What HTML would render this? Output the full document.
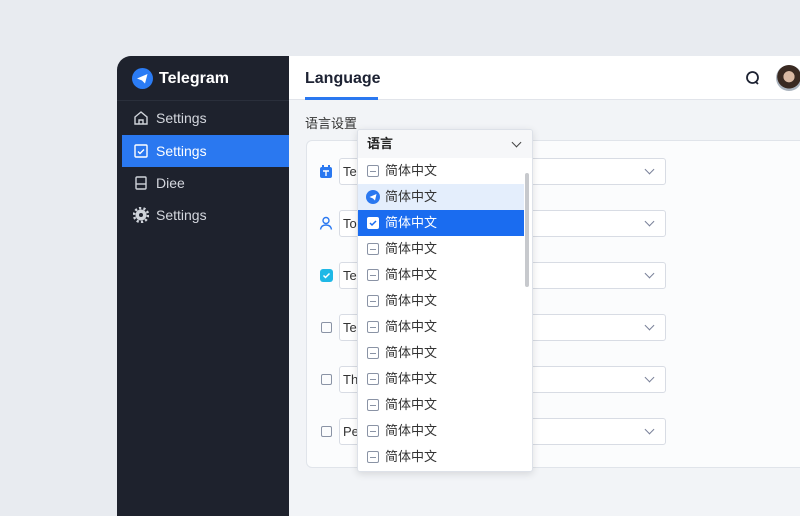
<!DOCTYPE html>
<html><head><meta charset="utf-8"><style>
*{margin:0;padding:0;box-sizing:border-box}
body{width:800px;height:499px;overflow:hidden;background:#e8ebf0;font-family:"Liberation Sans","Noto Sans CJK SC",sans-serif;position:relative}
.win{position:absolute;left:117px;top:56px;width:700px;height:460px;border-radius:14px 0 0 0;overflow:hidden;background:#f2f4f7}
.side{position:absolute;left:0;top:0;width:172px;height:100%;background:#1e222d}
.logo{position:absolute;left:15px;top:12px;width:21px;height:21px;border-radius:50%;background:#2b7cf5}
.brand{position:absolute;left:42px;top:14px;color:#fff;font-weight:bold;font-size:16px}
.div{position:absolute;left:0;top:44px;width:172px;height:1px;background:#2a2f3b}
.it{position:absolute;left:5px;width:167px;height:32px;color:#d4d7de;font-size:14px;line-height:32px;padding-left:34px}
.it svg{position:absolute;left:11px;top:8px}
.act{background:#2a78f0;color:#fff}
.hdr{position:absolute;left:172px;top:0;right:0;height:44px;background:#fff;border-bottom:1px solid #e1e4ea}
.tab{position:absolute;left:16px;top:14px;font-weight:bold;font-size:16px;color:#1d2233}
.ul{position:absolute;left:16px;top:41px;width:73px;height:3px;background:#2a78f0}
.card{position:absolute;left:189px;top:84px;width:520px;height:328px;background:#fbfcfd;border:1px solid #e0e4ea;border-radius:6px}
.sel{position:absolute;left:222px;width:327px;height:27px;background:#fff;border:1px solid #d8dce4;border-radius:3px;font-size:13px;color:#333;line-height:25px;padding-left:3px}
.sel:after{content:"";position:absolute;right:12px;top:7px;width:6px;height:6px;border-right:1.5px solid #7a8199;border-bottom:1.5px solid #7a8199;transform:rotate(45deg)}
.cb{position:absolute;left:204px;width:11px;height:11px;border:1.3px solid #8a93a5;border-radius:2px}
.dd{position:absolute;left:357px;top:129px;width:176px;height:343px;background:#fff;border:1px solid #dde1e8;border-radius:3px;box-shadow:0 2px 8px rgba(0,0,0,.12);overflow:hidden}
.ddh{height:28px;background:#f6f7f9;font-weight:bold;font-size:13px;line-height:28px;padding-left:9px;color:#222;position:relative}
.ddh:after{content:"";position:absolute;right:12px;top:9px;width:6px;height:6px;border-right:1.5px solid #444;border-bottom:1.5px solid #444;transform:rotate(45deg)}
.o{height:26px;line-height:26px;font-size:13px;color:#333;padding-left:27px;position:relative;width:166px}
.o i{position:absolute;left:9px;top:7px;width:12px;height:12px;border:1.2px solid #8a93a5;border-radius:2px}
.o i:after{content:"";position:absolute;left:2px;top:4.5px;width:6px;height:1.2px;background:#8a93a5}
.o.l{background:#e4eefc}
.o.s{background:#1a6cf0;color:#fff}
.sb{position:absolute;right:3px;top:43px;width:4px;height:114px;background:#c7c9cd;border-radius:2px}
</style></head><body>
<div class="win">
<div class="side">
<div class="logo"><svg width="21" height="21" viewBox="0 0 21 21"><path d="M5 10.5 15.5 6 13 15.5 10 12.5Z" fill="#fff"/></svg></div>
<div class="brand">Telegram</div>
<div class="div"></div>
<div class="it" style="top:46px"><svg width="16" height="16" viewBox="0 0 16 16" fill="none" stroke="#cfd3da" stroke-width="1.4"><path d="M2 7 8 2 14 7V14H2Z"/><path d="M6 14V10H10V14"/></svg>Settings</div>
<div class="it act" style="top:79px"><svg width="16" height="16" viewBox="0 0 16 16" fill="none" stroke="#fff" stroke-width="1.4"><rect x="2" y="2" width="12" height="12" rx="1"/><path d="M5 8.5 7 10.5 11 6.5"/></svg>Settings</div>
<div class="it" style="top:111px"><svg width="16" height="16" viewBox="0 0 16 16" fill="none" stroke="#cfd3da" stroke-width="1.4"><rect x="3" y="2" width="10" height="12" rx="1"/><path d="M3 9H13"/></svg>Diee</div>
<div class="it" style="top:143px"><svg width="16" height="16" viewBox="0 0 16 16"><circle cx="8" cy="8" r="5.5" fill="#cfd3da"/><circle cx="8" cy="8" r="7" fill="none" stroke="#cfd3da" stroke-width="2.5" stroke-dasharray="2.2 2.2"/><circle cx="8" cy="8" r="2" fill="#1e222d"/></svg>Settings</div>
</div>
<div class="hdr"><div class="tab">Language</div><div class="ul"></div>
<svg style="position:absolute;left:456px;top:14px" width="16" height="16" viewBox="0 0 16 16" fill="none" stroke="#1e2333" stroke-width="1.8"><circle cx="7.5" cy="7.5" r="5.5"/><path d="M11 12 13 14"/></svg>
<div style="position:absolute;left:487px;top:9px;width:26px;height:26px;border-radius:50%;background:radial-gradient(circle at 50% 45%,#d9b9a3 0 28%,#3a2a22 30% 60%,#aab3bd 62%)"></div>
</div>
</div>
<div style="left:305px;top:113px;position:absolute;font-size:13px;color:#333">语言设置</div>
<div class="card" style="left:306px;top:140px"></div>
<svg style="position:absolute;left:320px;top:165px" width="12" height="13" viewBox="0 0 12 13"><rect x="0" y="2" width="12" height="11" rx="2" fill="#2a78f0"/><rect x="2" y="0" width="2" height="3" fill="#2a78f0"/><rect x="8" y="0" width="2" height="3" fill="#2a78f0"/><path d="M3 6H9M6 6V11" stroke="#fff" stroke-width="1.4"/></svg>
<svg style="position:absolute;left:319px;top:216px" width="14" height="14" viewBox="0 0 14 14" fill="none" stroke="#2a78f0" stroke-width="1.4"><circle cx="7" cy="4.5" r="3"/><path d="M1.5 13.5C2 10 4 9 7 9S12 10 12.5 13.5"/></svg>
<svg style="position:absolute;left:320px;top:269px" width="13" height="13" viewBox="0 0 13 13"><rect width="13" height="13" rx="3" fill="#1fb8e6"/><path d="M3.5 6.5 5.5 8.5 9.5 4.5" stroke="#fff" stroke-width="1.5" fill="none"/></svg>
<div class="cb" style="left:321px;top:322px"></div><div class="cb" style="left:321px;top:374px"></div><div class="cb" style="left:321px;top:426px"></div>
<div class="sel" style="left:339px;top:158px">Tel</div>
<div class="sel" style="left:339px;top:210px">To</div>
<div class="sel" style="left:339px;top:262px">Tes</div>
<div class="sel" style="left:339px;top:314px">Tes</div>
<div class="sel" style="left:339px;top:366px">Thu</div>
<div class="sel" style="left:339px;top:418px">Pe</div>
<div class="dd">
<div class="ddh">语言</div>
<div class="o"><i></i>简体中文</div>
<div class="o l"><svg style="position:absolute;left:8px;top:6px" width="14" height="14" viewBox="0 0 14 14"><circle cx="7" cy="7" r="7" fill="#2a78f0"/><path d="M3.5 7 10.5 4 9 10.5 7 8.5Z" fill="#fff"/></svg>简体中文</div>
<div class="o s"><svg style="position:absolute;left:9px;top:7px" width="12" height="12" viewBox="0 0 12 12"><rect width="12" height="12" rx="2" fill="#fff"/><path d="M3 6 5 8 9 4" stroke="#1a6cf0" stroke-width="1.5" fill="none"/></svg>简体中文</div>
<div class="o"><i></i>简体中文</div>
<div class="o"><i></i>简体中文</div>
<div class="o"><i></i>简体中文</div>
<div class="o"><i></i>简体中文</div>
<div class="o"><i></i>简体中文</div>
<div class="o"><i></i>简体中文</div>
<div class="o"><i></i>简体中文</div>
<div class="o"><i></i>简体中文</div>
<div class="o"><i></i>简体中文</div>
<div class="sb"></div>
</div>
</body></html>
